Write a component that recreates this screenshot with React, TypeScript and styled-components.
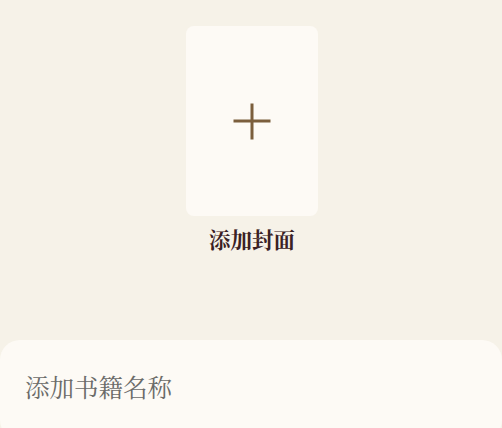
import React from "react";
import styled, { createGlobalStyle } from "styled-components";

const Global = createGlobalStyle`
  html, body { margin: 0; padding: 0; background: #f6f2e8; }
  body { width: 502px; height: 428px; overflow: hidden; }
`;

const Page = styled.div`
  display: flex;
  flex-direction: column;
  align-items: center;
  padding-top: 26px;
  font-family: "Noto Serif CJK SC", "Noto Serif SC", serif;
`;

const CoverButton = styled.button`
  width: 132px;
  height: 190px;
  margin-left: 2px;
  border: none;
  border-radius: 8px;
  background: #fdfaf5;
  display: flex;
  align-items: center;
  justify-content: center;
  padding: 0;
  cursor: pointer;
`;

const CoverLabel = styled.div`
  margin-top: 9px;
  margin-left: 2px;
  font-size: 21.5px;
  line-height: 28px;
  font-weight: 700;
  color: #3a2124;
`;

const NameField = styled.input`
  margin-top: 87px;
  box-sizing: border-box;
  width: 502px;
  height: 100px;
  border: none;
  outline: none;
  border-radius: 20px;
  background: #fdfaf5;
  padding: 0 0 8px 25px;
  font-family: "Noto Serif CJK SC", "Noto Serif SC", serif;
  font-size: 24.5px;
  color: #333;
  &::placeholder { color: #6b6b69; }
`;

export default function App() {
  return (
    <>
      <Global />
      <Page>
        <CoverButton aria-label="添加封面">
          <svg width="38" height="38" viewBox="0 0 38 38">
            <path d="M19 1.5V37.5M0.5 19H37.5" stroke="#7b5e3c" strokeWidth="3" fill="none" />
          </svg>
        </CoverButton>
        <CoverLabel>添加封面</CoverLabel>
        <NameField placeholder="添加书籍名称" />
      </Page>
    </>
  );
}
